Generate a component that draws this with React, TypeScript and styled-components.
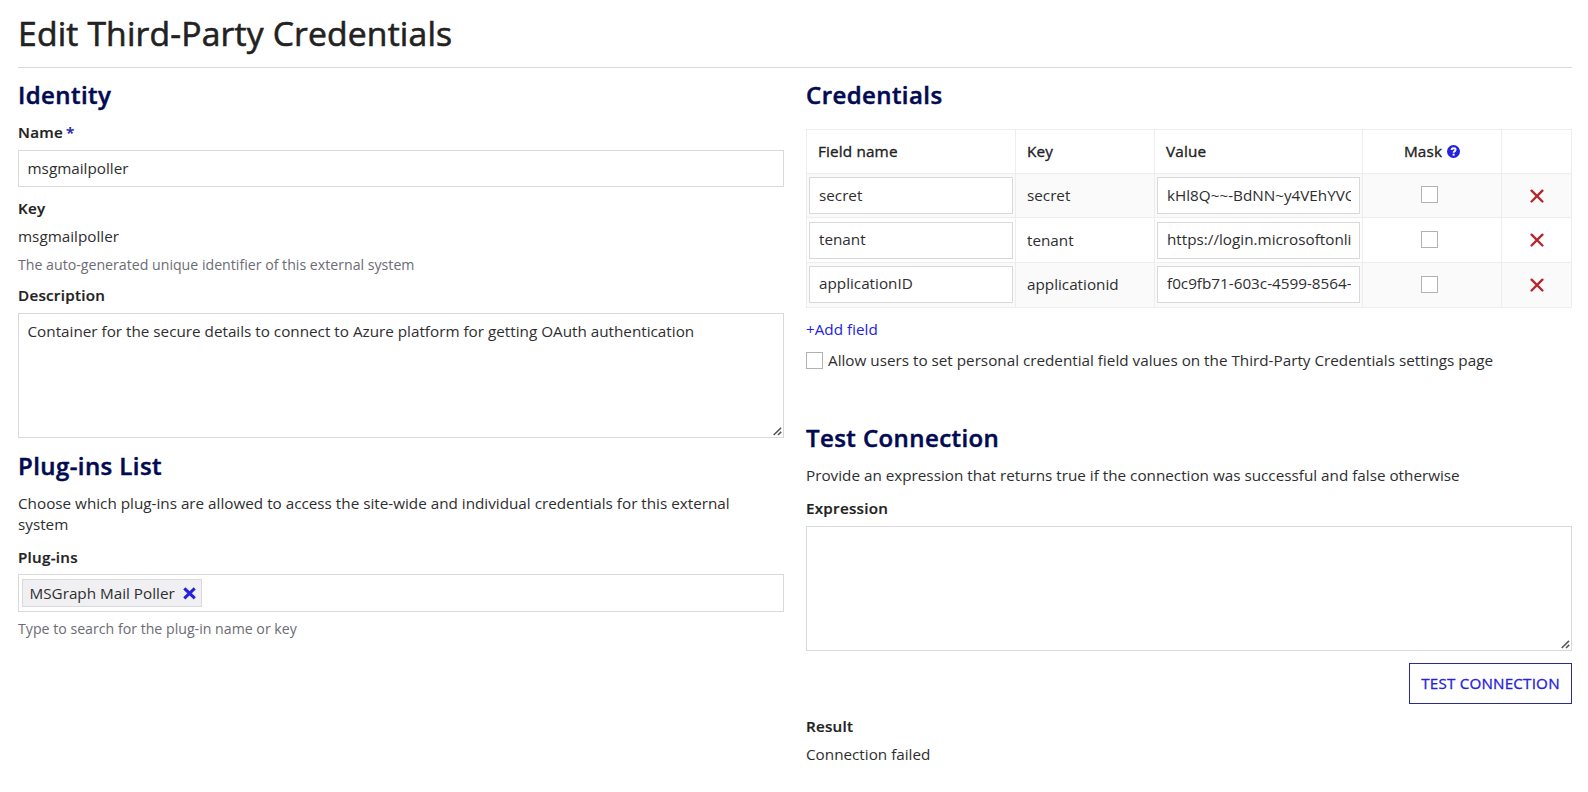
import React from 'react';
import styled, { createGlobalStyle } from 'styled-components';

const Global = createGlobalStyle`
  *, *::before, *::after { box-sizing: border-box; }
  body {
    margin: 0;
    background: #fff;
    color: #2e2e30;
    font: 15.26px/21px "Open Sans", sans-serif;
  }
  input, textarea, button { font: inherit; color: inherit; }
`;

const line = '#d9d9db';
const grid = '#ededed';
const accent = '#2322dd';

const Page = styled.main`
  padding: 12px 16px 0 18px;
  height: 792px;
  overflow: hidden;
`;

const Title = styled.h1`
  margin: 0;
  height: 56px;
  border-bottom: 1px solid ${line};
  color: #222;
  font-size: 33.7px;
  font-weight: 400;
  line-height: 42px;
  letter-spacing: 0.16px;
  -webkit-text-stroke: 0.6px #222;
`;

const Columns = styled.div`
  display: grid;
  grid-template-columns: 766px 766px;
  column-gap: 22px;
`;

const Column = styled.section`
  display: flex;
  flex-direction: column;
`;

const Heading = styled.h2<{ $top: number }>`
  margin: ${p => p.$top}px 0 0;
  color: #020a51;
  font-size: 24px;
  font-weight: 600;
  line-height: 32px;
  letter-spacing: 0.42px;
  -webkit-text-stroke: 0.5px #020a51;
`;

const Label = styled.label<{ $top: number }>`
  display: block;
  margin-top: ${p => p.$top}px;
  color: #222;
  font-size: 15.2px;
  font-weight: 600;
  letter-spacing: 0.26px;
  -webkit-text-stroke: 0.2px #222;
`;

const Required = styled.span`
  margin-left: 3px;
  color: ${accent};
`;

const Text = styled.p<{ $top: number }>`
  margin: ${p => p.$top}px 0 0;
  padding-right: 10px;
`;

const Help = styled.p<{ $top: number }>`
  margin: ${p => p.$top}px 0 0;
  color: #6c6c75;
  font-size: 14.17px;
`;

const TextInput = styled.input`
  display: block;
  width: 100%;
  height: 37px;
  padding: 0 8.5px 2px;
  border: 1px solid ${line};
  border-radius: 0;
  background: #fff;
  outline: none;
`;

const NameInput = styled(TextInput)`
  margin-top: 7px;
`;

const CellInput = styled(TextInput)`
  padding-left: 9px;
`;

const AreaFrame = styled.div`
  position: relative;
  height: 125px;
  margin-top: 7px;
`;

const TextArea = styled.textarea`
  display: block;
  width: 100%;
  height: 100%;
  padding: 7px 8.5px;
  border: 1px solid ${line};
  border-radius: 0;
  outline: none;
  resize: none;
`;

const Grip = styled.svg`
  position: absolute;
  right: 2px;
  bottom: 2px;
`;

const Picker = styled.div`
  display: flex;
  align-items: center;
  height: 38px;
  margin-top: 6px;
  padding: 0 3px;
  border: 1px solid ${line};
`;

const Chip = styled.span`
  display: flex;
  align-items: center;
  gap: 8px;
  height: 28px;
  padding: 0 5px 0 6.5px;
  border: 1px solid ${line};
  background: #f0f0f2;
`;

const Table = styled.table`
  width: 766px;
  margin-top: 18px;
  border-collapse: collapse;
  table-layout: fixed;
`;

const Row = styled.tr<{ $h: number; $shaded?: boolean }>`
  height: ${p => p.$h}px;
  background: ${p => (p.$shaded ? '#fafafa' : '#fff')};
`;

const Th = styled.th<{ $center?: boolean }>`
  padding: 0 11px;
  border: 1px solid ${grid};
  color: #222;
  font-size: 15.3px;
  font-weight: 400;
  letter-spacing: 0.15px;
  text-align: ${p => (p.$center ? 'center' : 'left')};
  -webkit-text-stroke: 0.35px #222;
`;

const MaskHead = styled.span`
  display: inline-flex;
  align-items: center;
  gap: 5px;
`;

const Td = styled.td<{ $kind?: 'input' | 'center'; $lift?: number }>`
  padding: ${p => (p.$kind === 'input' ? '0 2px' : p.$kind === 'center' ? '0' : '0 11px')};
  padding-bottom: ${p => p.$lift ?? 0}px;
  border: 1px solid ${grid};
  text-align: ${p => (p.$kind === 'center' ? 'center' : 'left')};
  vertical-align: middle;
`;

const Check = styled.input.attrs({ type: 'checkbox' })`
  appearance: none;
  display: inline-block;
  flex: none;
  width: 17px;
  height: 17px;
  margin: 0;
  border: 1px solid #b2b2b2;
  background: #fff;
  vertical-align: middle;
`;

const MaskCheck = styled(Check)`
  display: block;
  margin: 0 auto 2px 58px;
`;

const RemoveIcon = styled.svg`
  display: block;
  margin: 0 auto;
`;

const AddLink = styled.a`
  margin-top: 11px;
  align-self: flex-start;
  color: ${accent};
`;

const CheckRow = styled.label`
  display: flex;
  align-items: center;
  gap: 5px;
  margin-top: 10px;
`;

const TestButton = styled.button`
  align-self: flex-end;
  width: 163px;
  height: 41px;
  margin-top: 12px;
  padding: 0;
  border: 1px solid #2a2d90;
  background: #fff;
  color: ${accent};
  font-size: 15.2px;
  letter-spacing: 0.2px;
  -webkit-text-stroke: 0.3px ${accent};
`;

const CloseGlyph = () => (
  <svg width="13" height="13" viewBox="0 0 13 13">
    <path d="M2.4 2.4L10.6 10.2M10.6 2.4L2.4 10.2" stroke={accent} strokeWidth="3.1" strokeLinecap="square" />
  </svg>
);

const HelpGlyph = () => (
  <svg width="13" height="13" viewBox="0 0 13 13">
    <circle cx="6.5" cy="6.5" r="6.5" fill={accent} />
    <path d="M4.4 4.9Q4.8 3.3 6.5 3.3Q8.6 3.3 8.6 4.8Q8.6 5.7 7.5 6.3Q6.6 6.8 6.6 7.8" fill="none" stroke="#fff" strokeWidth="1.9" />
    <rect x="5.6" y="8.7" width="2" height="1.9" fill="#fff" />
  </svg>
);

const RemoveGlyph = () => (
  <RemoveIcon width="14" height="14" viewBox="0 0 14 14">
    <path d="M1.6 1.7L12.4 12.5M12.4 1.7L1.6 12.5" stroke="#b3282d" strokeWidth="2.4" strokeLinecap="round" />
  </RemoveIcon>
);

const Area = ({ text = '' }: { text?: string }) => (
  <AreaFrame>
    <TextArea defaultValue={text} />
    <Grip width="9" height="9" viewBox="0 0 9 9">
      <path d="M0.7 8L8 0.9M5 8L8.2 4.9" stroke="#555" strokeWidth="1.5" />
    </Grip>
  </AreaFrame>
);

const fields = [
  { name: 'secret', key: 'secret', value: 'kHl8Q~~-BdNN~y4VEhYVO', height: 44, lift: 0 },
  { name: 'tenant', key: 'tenant', value: 'https://login.microsoftonline', height: 45, lift: 0 },
  { name: 'applicationID', key: 'applicationid', value: 'f0c9fb71-603c-4599-8564-', height: 45, lift: 2 },
];

export default function App() {
  return (
    <Page>
      <Global />
      <Title>Edit Third-Party Credentials</Title>
      <Columns>
        <Column>
          <Heading $top={11}>Identity</Heading>
          <Label $top={11}>Name<Required>*</Required></Label>
          <NameInput defaultValue="msgmailpoller" />
          <Label $top={11}>Key</Label>
          <Text $top={7}>msgmailpoller</Text>
          <Help $top={7}>The auto-generated unique identifier of this external system</Help>
          <Label $top={10}>Description</Label>
          <Area text="Container for the secure details to connect to Azure platform for getting OAuth authentication" />
          <Heading $top={12}>Plug-ins List</Heading>
          <Text $top={11}>
            Choose which plug-ins are allowed to access the site-wide and individual credentials for this external system
          </Text>
          <Label $top={12}>Plug-ins</Label>
          <Picker>
            <Chip>MSGraph Mail Poller<CloseGlyph /></Chip>
          </Picker>
          <Help $top={6}>Type to search for the plug-in name or key</Help>
        </Column>
        <Column>
          <Heading $top={11}>Credentials</Heading>
          <Table>
            <colgroup>
              <col width="209" /><col width="139" /><col width="208" /><col width="139" /><col width="70" />
            </colgroup>
            <thead>
              <Row $h={44}>
                <Th>Field name</Th>
                <Th>Key</Th>
                <Th>Value</Th>
                <Th $center><MaskHead>Mask<HelpGlyph /></MaskHead></Th>
                <Th />
              </Row>
            </thead>
            <tbody>
              {fields.map((f, i) => (
                <Row key={f.name} $h={f.height} $shaded={i % 2 === 0}>
                  <Td $kind="input" $lift={f.lift}><CellInput defaultValue={f.name} /></Td>
                  <Td $lift={f.lift}>{f.key}</Td>
                  <Td $kind="input" $lift={f.lift}><CellInput defaultValue={f.value} /></Td>
                  <Td $kind="center"><MaskCheck /></Td>
                  <Td $kind="center"><RemoveGlyph /></Td>
                </Row>
              ))}
            </tbody>
          </Table>
          <AddLink>+Add field</AddLink>
          <CheckRow>
            <Check />
            Allow users to set personal credential field values on the Third-Party Credentials settings page
          </CheckRow>
          <Heading $top={51}>Test Connection</Heading>
          <Text $top={11}>Provide an expression that returns true if the connection was successful and false otherwise</Text>
          <Label $top={12}>Expression</Label>
          <Area />
          <TestButton>TEST CONNECTION</TestButton>
          <Label $top={12}>Result</Label>
          <Text $top={7}>Connection failed</Text>
        </Column>
      </Columns>
    </Page>
  );
}
